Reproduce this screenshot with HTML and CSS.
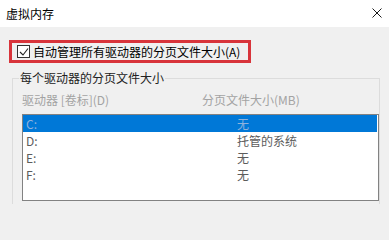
FILE: index.html
```html
<!DOCTYPE html>
<html lang="zh-CN">
<head>
<meta charset="utf-8">
<title>虚拟内存</title>
<link rel="stylesheet" href="styles.css">
</head>
<body>
<div class="window">
  <div class="titlebar">
    <span class="title">虚拟内存</span>
    <svg class="close" width="10" height="10" viewBox="0 0 10 10"><path d="M0.5 0.5 L9.5 9.5 M9.5 0.5 L0.5 9.5" stroke="#1a1a1a" stroke-width="1" fill="none"/></svg>
  </div>
  <div class="content">
    <div class="autobox">
      <span class="checkbox"><svg width="10" height="10" viewBox="0 0 10 10"><polyline points="1,5 4,8 9,1.5" stroke="#222" stroke-width="1.1" fill="none"/></svg></span>
      <span class="autolabel">自动管理所有驱动器的分页文件大小(A)</span>
    </div>
    <div class="group">
      <div class="legend-row"><span class="legend">每个驱动器的分页文件大小</span></div>
      <div class="headers">
        <span>驱动器 [卷标](D)</span>
        <span>分页文件大小(MB)</span>
      </div>
      <div class="listbox">
        <div class="row selected"><span>C:</span><span>无</span></div>
        <div class="row"><span>D:</span><span>托管的系统</span></div>
        <div class="row"><span>E:</span><span>无</span></div>
        <div class="row"><span>F:</span><span>无</span></div>
      </div>
    </div>
  </div>
</div>
</body>
</html>
```
FILE: styles.css
```css
* { box-sizing: border-box; }
html, body {
  margin: 0;
  padding: 0;
  background: #f0f0f0;
}
body {
  width: 389px;
  height: 204px;
  overflow: hidden;
  font-family: "Noto Sans CJK SC", "Noto Sans", sans-serif;
  font-size: 12px;
  color: #000;
}
.window {
  width: 389px;
  height: 204px;
  overflow: hidden;
  background: #f0f0f0;
}
.titlebar {
  height: 27px;
  background: #ffffff;
  display: flex;
  align-items: center;
  justify-content: space-between;
  padding: 0 7px 0 6px;
}
.title {
  line-height: 16px;
  color: #000;
}
.close {
  display: block;
  margin-top: -2px;
}
.content {
  padding: 13px 0 0 9px;
}
.autobox {
  width: 242px;
  height: 23px;
  border: 3px solid #d8343b;
  display: flex;
  align-items: center;
  padding-left: 5px;
  gap: 3px;
}
.checkbox {
  width: 13px;
  height: 13px;
  border: 1px solid #333;
  background: #fff;
  display: flex;
  align-items: center;
  justify-content: center;
  flex: none;
}
.checkbox svg { display: block; }
.autolabel {
  line-height: 15px;
  white-space: nowrap;
}
.group {
  margin: 15px 0 0 3px;
  width: 368px;
  height: 140px;
  border: 1px solid #dcdcdc;
  padding: 0 0 0 9px;
}
.legend-row {
  height: 0;
  display: flex;
}
.legend {
  margin: -8px 0 0 -3px;
  padding: 0 1px;
  line-height: 14px;
  height: 14px;
  color: #222;
  background: #f0f0f0;
}
.headers {
  display: grid;
  grid-template-columns: 180px 1fr;
  line-height: 14px;
  margin-top: 14px;
  color: #a3a3a3;
  white-space: nowrap;
}
.listbox {
  margin-top: 7px;
  width: 357px;
  height: 87px;
  border: 1px solid #828282;
  background: #fff;
}
.row {
  display: grid;
  grid-template-columns: 211px 1fr;
  height: 17px;
  line-height: 17px;
  padding-left: 3px;
  color: #5c5c5c;
  white-space: nowrap;
}
.row.selected {
  background: #0078d7;
  color: #8fb2dc;
  margin-right: 1px;
}
```
